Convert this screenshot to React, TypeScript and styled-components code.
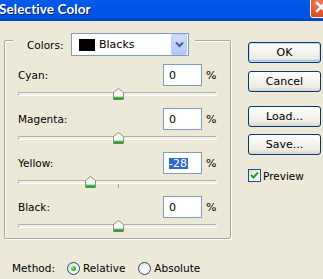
import React from "react";
import styled, { createGlobalStyle } from "styled-components";

const Global = createGlobalStyle`
  html, body { margin: 0; padding: 0; background: #ECE9D8; }
  * { box-sizing: border-box; }
`;

const Window = styled.div`
  width: 323px;
  height: 279px;
  overflow: hidden;
  background: #ECE9D8;
  font-family: "DejaVu Sans", "Liberation Sans", sans-serif;
  font-size: 10.5px;
  color: #000;
  display: flex;
  flex-direction: column;
`;

const TitleBar = styled.div`
  height: 21px;
  flex: none;
  display: flex;
  align-items: flex-start;
  overflow: hidden;
  background: linear-gradient(
    180deg,
    #0a5ce8 0px,
    #0058ea 3px,
    #0055e5 10px,
    #0053e0 17px,
    #0048cc 20px,
    #003fb8 21px
  );
`;

const Title = styled.span`
  font-family: Lato, "Liberation Sans", sans-serif;
  font-weight: 700;
  font-size: 13.5px;
  line-height: 19px;
  color: #fff;
  margin-left: -1px;
  text-shadow: 1px 1px 0 #0a1e70;
  letter-spacing: 0.1px;
`;

const CloseButton = styled.div`
  margin-left: auto;
  margin-top: -4px;
  margin-right: -9px;
  width: 22px;
  height: 22px;
  flex: none;
  border: 1px solid #fff;
  border-radius: 3px;
  background: radial-gradient(circle at 35% 30%, #f08a6c 0%, #e2582f 45%, #c53a14 100%);
  display: flex;
  align-items: center;
  justify-content: center;
`;

const Content = styled.div`
  flex: 1;
  display: flex;
  flex-direction: column;
  padding: 19px 0 0 4px;
`;

const MainRow = styled.div`
  display: flex;
  align-items: flex-start;
`;

const GroupBox = styled.div`
  width: 227px;
  height: 199px;
  border: 1px solid #aca899;
  border-radius: 2px;
  box-shadow: inset 1px 1px 0 #fff, 1px 1px 0 #fff;
  padding: 0 13px 0 13px;
  display: flex;
  flex-direction: column;
`;

const GroupHeader = styled.div`
  margin: -8px 0 0 -5px;
  align-self: flex-start;
  display: flex;
  align-items: center;
  background: #ece9d8;
  padding: 0 6px 0 14px;
  height: 23px;
`;

const HeaderLabel = styled.span`
  width: 44px;
`;

const Combo = styled.div`
  width: 118px;
  height: 23px;
  border: 1px solid #7f9db9;
  background: #fff;
  display: flex;
  align-items: center;
  padding: 0 1px 0 7px;
`;

const Swatch = styled.div<{ $color: string }>`
  width: 16px;
  height: 12px;
  background: ${(p) => p.$color};
  flex: none;
`;

const ComboText = styled.span`
  margin-left: 4px;
  flex: 1;
  font-size: 11px;
`;

const ComboArrow = styled.div`
  width: 16px;
  height: 21px;
  border-radius: 2px;
  background: linear-gradient(180deg, #d2def9 0%, #c1d3fb 50%, #b4c8f6 100%);
  border: 1px solid #bacdf8;
  display: flex;
  align-items: center;
  justify-content: center;
`;

const Sections = styled.div`
  margin-top: 8px;
  display: flex;
  flex-direction: column;
  gap: 8px;
`;

const Section = styled.div`
  display: flex;
  flex-direction: column;
`;

const InputRow = styled.div`
  height: 22px;
  display: flex;
  align-items: center;
`;

const RowLabel = styled.span`
  flex: 1;
`;

const Field = styled.div`
  width: 39px;
  height: 22px;
  border: 1px solid #7f9db9;
  background: #fff;
  display: flex;
  align-items: center;
  padding-left: 5px;
  font-size: 11px;
`;

const Selected = styled.span`
  background: #316ac5;
  color: #fff;
  line-height: 11px;
  padding: 0 1px 0 0;
`;

const Percent = styled.span`
  margin-left: 4px;
  width: 11px;
  font-size: 11px;
`;

const SliderBox = styled.div`
  position: relative;
  margin-top: 2px;
  height: 12px;
`;

const Track = styled.div`
  position: absolute;
  left: 0;
  right: 0;
  top: 4px;
  height: 4px;
  border: 1px solid #b2b0a4;
  border-bottom-color: #fff;
  border-right-color: #fff;
  border-radius: 2px;
  background: #f2f1ec;
`;

const Tick = styled.div`
  position: absolute;
  left: 100px;
  top: 8px;
  width: 1px;
  height: 4px;
  background: #a09d90;
`;

const Thumb = styled.svg`
  position: absolute;
  top: 0;
`;

const RightColumn = styled.div`
  margin-left: 17px;
  display: flex;
  flex-direction: column;
  width: 73px;
`;

const Button = styled.div<{ $top: number; $default?: boolean }>`
  margin-top: ${(p) => p.$top}px;
  height: 21px;
  border: 1px solid #003c74;
  border-radius: 3px;
  background: linear-gradient(180deg, #ffffff 0%, #f6f5f0 40%, #ecebe4 80%, #d8d2c6 100%);
  box-shadow: ${(p) =>
    p.$default ? "inset 0 0 0 1px #c9d8f7, inset 0 -1px 0 1px #a4bde9" : "inset 0 -1px 0 #dcd6cb"};
  display: flex;
  align-items: center;
  justify-content: center;
  font-size: 11px;
`;

const CheckRow = styled.div`
  margin-top: 14px;
  display: flex;
  align-items: center;
  gap: 2px;
  height: 13px;
`;

const CheckBox = styled.div`
  width: 13px;
  height: 13px;
  border: 1px solid #1c5180;
  background: linear-gradient(135deg, #dcdcd6 0%, #f4f4f0 60%, #ffffff 100%);
  display: flex;
  align-items: center;
  justify-content: center;
`;

const MethodRow = styled.div`
  margin-top: 21px;
  padding-left: 8px;
  height: 16px;
  display: flex;
  align-items: center;
`;

const MethodLabel = styled.span`
  width: 55px;
`;

const RadioItem = styled.div<{ $gapAfter?: number }>`
  display: flex;
  align-items: center;
  gap: 3px;
  margin-right: ${(p) => p.$gapAfter ?? 0}px;
`;

const Radio = styled.div`
  width: 13px;
  height: 13px;
  border-radius: 50%;
  border: 1px solid #1c5180;
  background: radial-gradient(circle at 65% 65%, #ffffff 0%, #f1f1ec 50%, #d3d2ca 100%);
  display: flex;
  align-items: center;
  justify-content: center;
`;

const Dot = styled.div`
  width: 5px;
  height: 5px;
  border-radius: 50%;
  background: radial-gradient(circle at 35% 35%, #9be59b 0%, #2ab52a 60%, #1d8d1d 100%);
`;

function SliderThumb({ left }: { left: number }) {
  return (
    <Thumb width="11" height="12" viewBox="0 0 11 12" style={{ left }}>
      <path d="M0.5 4.5 L5.5 0.5 L10.5 4.5 V11.5 H0.5 Z" fill="#f7f7f3" stroke="#8e8d82" />
      <rect x="1" y="9" width="9" height="2.5" fill="#21a121" />
      <rect x="1" y="8.5" width="9" height="1" fill="#7ed37e" />
    </Thumb>
  );
}

type Row = { label: string; value: number; selected?: boolean };

const rows: Row[] = [
  { label: "Cyan:", value: 0 },
  { label: "Magenta:", value: 0 },
  { label: "Yellow:", value: -28, selected: true },
  { label: "Black:", value: 0 },
];

export default function App() {
  return (
    <>
      <Global />
      <Window>
        <TitleBar>
          <Title>Selective Color</Title>
          <CloseButton>
            <svg width="12" height="12" viewBox="0 0 12 12">
              <path d="M2 2 L10 10 M10 2 L2 10" stroke="#fff" strokeWidth="2.4" strokeLinecap="square" />
            </svg>
          </CloseButton>
        </TitleBar>
        <Content>
          <MainRow>
            <GroupBox>
              <GroupHeader>
                <HeaderLabel>Colors:</HeaderLabel>
                <Combo>
                  <Swatch $color="#000" />
                  <ComboText>Blacks</ComboText>
                  <ComboArrow>
                    <svg width="9" height="7" viewBox="0 0 9 7">
                      <path d="M1 1.5 L4.5 5 L8 1.5" fill="none" stroke="#4d6185" strokeWidth="2" />
                    </svg>
                  </ComboArrow>
                </Combo>
              </GroupHeader>
              <Sections>
                {rows.map((r) => (
                  <Section key={r.label}>
                    <InputRow>
                      <RowLabel>{r.label}</RowLabel>
                      <Field>{r.selected ? <Selected>{r.value}</Selected> : r.value}</Field>
                      <Percent>%</Percent>
                    </InputRow>
                    <SliderBox>
                      <Track />
                      <Tick />
                      <SliderThumb left={95 + r.value} />
                    </SliderBox>
                  </Section>
                ))}
              </Sections>
            </GroupBox>
            <RightColumn>
              <Button $top={2} $default>OK</Button>
              <Button $top={8}>Cancel</Button>
              <Button $top={14}>Load...</Button>
              <Button $top={7}>Save...</Button>
              <CheckRow>
                <CheckBox>
                  <svg width="9" height="9" viewBox="0 0 9 9">
                    <path d="M1 4 L3.5 6.5 L8 1.5" fill="none" stroke="#21a121" strokeWidth="2" />
                  </svg>
                </CheckBox>
                <span>Preview</span>
              </CheckRow>
            </RightColumn>
          </MainRow>
          <MethodRow>
            <MethodLabel>Method:</MethodLabel>
            <RadioItem $gapAfter={13}>
              <Radio>
                <Dot />
              </Radio>
              <span>Relative</span>
            </RadioItem>
            <RadioItem>
              <Radio />
              <span>Absolute</span>
            </RadioItem>
          </MethodRow>
        </Content>
      </Window>
    </>
  );
}
